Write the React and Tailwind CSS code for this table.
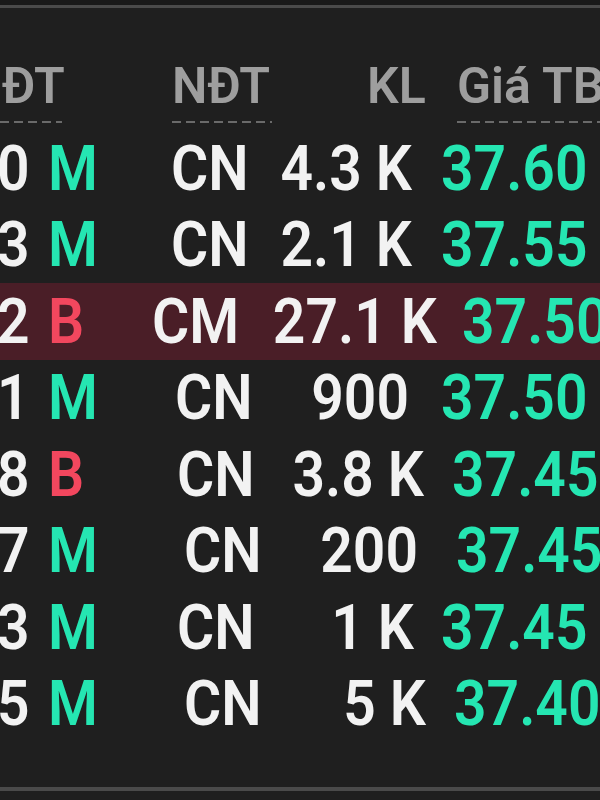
import React from "react";

const rows = [
  { d: "0", s: "M", t: "CN", kl: "4.3 K", p: "37.60", side: "w-[123px]", cn: "w-[99px]", klw: "w-[142px]", pp: "pl-[29px]" },
  { d: "3", s: "M", t: "CN", kl: "2.1 K", p: "37.55", side: "w-[123px]", cn: "w-[99px]", klw: "w-[142px]", pp: "pl-[29px]" },
  { d: "2", s: "B", t: "CM", kl: "27.1 K", p: "37.50", side: "w-[104px]", cn: "w-[118px]", klw: "w-[167px]", pp: "pl-[25px]", hl: true },
  { d: "1", s: "M", t: "CN", kl: "900", p: "37.50", side: "w-[127px]", cn: "w-[95px]", klw: "w-[139px]", pp: "pl-[32px]" },
  { d: "8", s: "B", t: "CN", kl: "3.8 K", p: "37.45", side: "w-[129px]", cn: "w-[93px]", klw: "w-[154px]", pp: "pl-[28px]" },
  { d: "7", s: "M", t: "CN", kl: "200", p: "37.45", side: "w-[136px]", cn: "w-[86px]", klw: "w-[148px]", pp: "pl-[38px]" },
  { d: "3", s: "M", t: "CN", kl: "1 K", p: "37.45", side: "w-[129px]", cn: "w-[93px]", klw: "w-[144px]", pp: "pl-[27px]" },
  { d: "5", s: "M", t: "CN", kl: "5 K", p: "37.40", side: "w-[136px]", cn: "w-[86px]", klw: "w-[156px]", pp: "pl-[28px]" },
];

const txt = "inline-block scale-y-[1.1] leading-none whitespace-nowrap";
const dash = "h-[2px] bg-[repeating-linear-gradient(90deg,#6a6a6a_0_9px,transparent_9px_14px)]";

export default function App() {
  return (
    <div
      className="w-[600px] h-[800px] overflow-hidden bg-[#1f1f1f] flex flex-col"
      style={{ fontFamily: "Roboto, 'Noto Sans', sans-serif" }}
    >
      <div className="h-[5px] bg-[#191919] shrink-0" />
      <div className="h-[3px] bg-[#4a4a4a] shrink-0" />

      {/* header */}
      <div className="h-[122px] shrink-0 flex items-start pt-[53px] text-[50px] font-semibold text-[#9e9e9e]">
        <div className="w-[172px] shrink-0 flex flex-col">
          <span className="leading-none whitespace-nowrap pl-[2px]">ĐT</span>
          <div className={`mt-[10px] w-[62px] ${dash}`} />
        </div>
        <div className="w-[195px] shrink-0 flex flex-col">
          <span className="leading-none whitespace-nowrap">NĐT</span>
          <div className={`mt-[10px] w-[100px] ${dash}`} />
        </div>
        <div className="w-[90px] shrink-0 flex flex-col">
          <span className="leading-none whitespace-nowrap">KL</span>
        </div>
        <div className="shrink-0 flex flex-col">
          <span className="leading-none whitespace-nowrap">Giá TB</span>
          <div className={`mt-[10px] w-[160px] ${dash}`} />
        </div>
      </div>

      {/* rows */}
      <div className="flex flex-col text-[57px] font-semibold">
        {rows.map((r, i) => (
          <div
            key={i}
            className={`h-[76.5px] shrink-0 flex items-center ${r.hl ? "bg-[#4a1e27]" : ""}`}
          >
            <div className="w-[51px] ml-[-3px] shrink-0 text-[#f2f2f2]">
              <span className={txt}>{r.d}</span>
            </div>
            <div className={`${r.side} shrink-0 ${r.s === "M" ? "text-[#25e6b2]" : "text-[#f2475e]"}`}>
              <span className={txt}>{r.s}</span>
            </div>
            <div className={`${r.cn} shrink-0 text-[#f2f2f2]`}>
              <span className={txt}>{r.t}</span>
            </div>
            <div className={`${r.klw} shrink-0 text-right text-[#f2f2f2]`}>
              <span className={txt}>{r.kl}</span>
            </div>
            <div className={`${r.pp} shrink-0 text-[#25e6b2]`}>
              <span className={txt}>{r.p}</span>
            </div>
          </div>
        ))}
      </div>

      <div className="flex-1" />
      <div className="h-[4px] bg-[#4a4a4a] shrink-0 mb-[9px]" />
    </div>
  );
}
